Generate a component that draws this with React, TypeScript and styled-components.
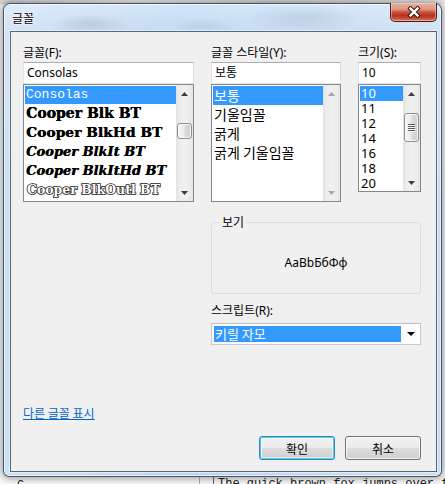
import React from "react";
import styled, { createGlobalStyle, css } from "styled-components";

const GlobalStyle = createGlobalStyle`
  html, body { margin: 0; padding: 0; }
  body {
    width: 445px; height: 484px; overflow: hidden; background: #fff;
    font-family: "Noto Sans", "Noto Sans CJK KR", sans-serif;
  }
  * { box-sizing: border-box; }
`;

const UI_FONT = `"Noto Sans", "Noto Sans CJK KR", sans-serif`;
const KR_FONT = `"Noto Sans CJK KR", "Noto Sans", sans-serif`;

/* ---------- desktop / background app ---------- */
const Desktop = styled.div`
  position: relative;
  width: 445px;
  height: 484px;
  overflow: hidden;
  background: #fff;
`;

const BackApp = styled.div`
  width: 100%;
  height: 100%;
  display: grid;
  grid-template-columns: 1fr 3px;
`;

const BackMain = styled.div`
  display: flex;
  flex-direction: column;
  justify-content: space-between;
  background: #fbfbfb;
`;

const BackTopStrip = styled.div`
  height: 4px;
  background: linear-gradient(90deg, #d8d8d8, #f4f4f4 30%, #dcdcdc 60%, #efefef);
`;

const BackBottomRow = styled.div`
  height: 10px;
  display: flex;
  font-family: "Liberation Mono", monospace;
  font-size: 12px;
  line-height: 14px;
  color: #222;
`;

const BackCell = styled.div<{ $w?: number; $line?: string }>`
  ${(p) => (p.$w ? `width: ${p.$w}px; flex: none;` : "flex: 1;")}
  ${(p) => (p.$line ? `border-right: 1px solid ${p.$line};` : "")}
  padding: 3px 0 0 4px;
  white-space: nowrap;
  overflow: hidden;
`;

const BackRightStrip = styled.div`
  margin-top: 26px;
  background: linear-gradient(180deg, #2e3238, #45494f 40%, #3a3e44);
`;

/* ---------- window frame ---------- */
const Window = styled.div`
  position: absolute;
  left: 3px;
  top: 3px;
  width: 439px;
  height: 474px;
  border: 1px solid rgba(38, 52, 70, 0.8);
  border-radius: 7px 7px 6px 6px;
  padding: 0 4px 4px 6px;
  display: flex;
  flex-direction: column;
  background:
    radial-gradient(ellipse 40px 10px at 85px 20px, rgba(110, 130, 160, 0.22), transparent),
    radial-gradient(ellipse 60px 14px at 300px 14px, rgba(110, 130, 160, 0.18), transparent),
    radial-gradient(ellipse 30px 8px at 200px 22px, rgba(120, 140, 170, 0.15), transparent),
    linear-gradient(90deg, rgba(255, 255, 255, 0.25), rgba(255, 255, 255, 0) 40%, rgba(255, 255, 255, 0.2)),
    linear-gradient(180deg, #d3e5f7 0px, #c2d9f1 30px, #b9d3ee 60%, #bcd6f0 100%);
  box-shadow:
    0 0 8px 1px rgba(0, 0, 0, 0.45),
    inset 0 0 0 1px rgba(255, 255, 255, 0.6);
`;

const TitleBar = styled.div`
  height: 27px;
  flex: none;
  display: flex;
  align-items: flex-start;
`;

const TitleText = styled.div`
  margin: 6px 0 0 2px;
  font-family: ${KR_FONT};
  font-size: 12px;
  line-height: 16px;
  color: #000;
  text-shadow: 0 0 6px #fff, 0 0 3px #fff, 0 0 1px #fff;
`;

const CloseButton = styled.div`
  margin-left: auto;
  width: 47px;
  height: 19px;
  margin-top: -1px;
  border: 1px solid #4a1f18;
  border-top: none;
  border-radius: 0 0 5px 5px;
  display: flex;
  align-items: center;
  justify-content: center;
  background: linear-gradient(
    180deg,
    #eab0a2 0%,
    #de9482 35%,
    #c8533c 50%,
    #b8321d 70%,
    #c9553a 88%,
    #e08a68 100%
  );
  box-shadow: inset 0 0 0 1px rgba(255, 220, 210, 0.45);
`;

const CloseGlyph = () => (
  <svg width="14" height="12" viewBox="0 0 14 12">
    <path d="M3.5 2.5 L10.5 9.5 M10.5 2.5 L3.5 9.5" stroke="#3d1a14" strokeWidth="4.4" strokeLinecap="square" />
    <path d="M3.5 2.5 L10.5 9.5 M10.5 2.5 L3.5 9.5" stroke="#ffffff" strokeWidth="2.4" strokeLinecap="square" />
  </svg>
);

/* ---------- client area ---------- */
const Client = styled.div`
  flex: 1;
  min-height: 0;
  background: #f0f0f0;
  border: 1px solid #56677a;
  box-shadow: 0 0 0 1px rgba(255, 255, 255, 0.5);
  padding: 13px 15px 11px 12px;
  display: flex;
  flex-direction: column;
  font-family: ${UI_FONT};
  font-size: 12px;
  color: #000;
`;

const TopGrid = styled.div`
  display: grid;
  grid-template-columns: 171px 130px 63px;
  column-gap: 17px;
  align-items: start;
`;

const Column = styled.div`
  display: flex;
  flex-direction: column;
`;

const Label = styled.div<{ $gap?: number }>`
  height: 16px;
  line-height: 16px;
  margin-bottom: ${(p) => p.$gap ?? 1}px;
  white-space: nowrap;
  font-family: ${UI_FONT};
  font-size: 12px;
`;

const TextInput = styled.div`
  height: 22px;
  border: 1px solid #abadb3;
  border-left-color: #e2e3ea;
  border-right-color: #dbdfe6;
  border-bottom-color: #e3e9ef;
  background: #fff;
  padding: 0 3px;
  line-height: 20px;
  font-family: ${UI_FONT};
  font-size: 12px;
  white-space: nowrap;
  overflow: hidden;
`;

const ListBox = styled.div<{ $h: number }>`
  height: ${(p) => p.$h}px;
  border: 1px solid #828790;
  background: #fff;
  display: flex;
  overflow: hidden;
`;

const ListItems = styled.div`
  flex: 1;
  min-width: 0;
  padding: 1px 0 0 1px;
  display: flex;
  flex-direction: column;
`;

type FontKind = "mono" | "blk" | "blkhd" | "it" | "ithd" | "outl" | "kr" | "num";

const heavy = css`
  font-family: "DejaVu Serif", serif;
  font-weight: bold;
  text-shadow: 0.45px 0 0 currentColor;
`;

const fontKindCss: Record<FontKind, ReturnType<typeof css>> = {
  mono: css`
    font-family: "Liberation Mono", monospace;
    font-size: 13px;
  `,
  blk: css`
    ${heavy};
    font-size: 14px;
  `,
  blkhd: css`
    ${heavy};
    font-size: 13.7px;
    letter-spacing: 0.1px;
  `,
  it: css`
    ${heavy};
    font-style: italic;
    font-size: 13px;
  `,
  ithd: css`
    ${heavy};
    font-style: italic;
    font-size: 13px;
  `,
  outl: css`
    font-family: "DejaVu Serif", serif;
    font-weight: bold;
    font-size: 12.5px;
    color: #fff;
    -webkit-text-stroke: 1.6px #1a1a1a;
    paint-order: stroke fill;
    padding-left: 2px;
  `,
  kr: css`
    font-family: ${KR_FONT};
    font-size: 14px;
  `,
  num: css`
    font-family: ${UI_FONT};
    font-size: 13px;
  `,
};

const ListItem = styled.div<{ $h: number; $kind: FontKind; $sel?: boolean }>`
  height: ${(p) => p.$h}px;
  flex: none;
  line-height: ${(p) => p.$h}px;
  padding-left: 1px;
  white-space: nowrap;
  overflow: hidden;
  color: #000;
  ${(p) => fontKindCss[p.$kind]}
  ${(p) =>
    p.$sel &&
    css`
      background: #3399ff;
      color: #fff;
    `}
`;

/* ---------- scrollbar ---------- */
const SBar = styled.div`
  width: 17px;
  flex: none;
  display: flex;
  flex-direction: column;
  background: linear-gradient(90deg, #e1e1e1 0%, #ececec 18%, #f1f1f1 50%, #ececec 82%, #e4e4e4 100%);
`;

const SBtn = styled.div`
  height: 17px;
  flex: none;
  display: flex;
  align-items: center;
  justify-content: center;
`;

const STrack = styled.div`
  flex: 1;
  display: flex;
  flex-direction: column;
`;

const SThumb = styled.div<{ $top: number; $h: number }>`
  margin: ${(p) => p.$top}px 1px 0 1px;
  height: ${(p) => p.$h}px;
  border: 1px solid #8e8f8f;
  border-radius: 3px;
  background: linear-gradient(90deg, #f4f4f4 0%, #ececec 45%, #dadada 55%, #d0d0d0 100%);
  box-shadow: inset 0 0 0 1px rgba(255, 255, 255, 0.75);
  display: flex;
  flex-direction: column;
  align-items: center;
  justify-content: center;
  gap: 1px;
`;

const Grip = styled.div`
  width: 7px;
  height: 1px;
  background: #5b5b5b;
  box-shadow: 0 1px 0 #fafafa;
`;

const Arrow = ({ up, color }: { up?: boolean; color: string }) => (
  <svg width="7" height="4" viewBox="0 0 7 4">
    <polygon points={up ? "3.5,0 7,4 0,4" : "0,0 7,0 3.5,4"} fill={color} />
  </svg>
);

const Scrollbar = ({
  enabled = true,
  thumbTop,
  thumbHeight,
  grip,
}: {
  enabled?: boolean;
  thumbTop?: number;
  thumbHeight?: number;
  grip?: boolean;
}) => {
  const c = enabled ? "#3f3f3f" : "#a6a6a6";
  return (
    <SBar>
      <SBtn>
        <Arrow up color={c} />
      </SBtn>
      <STrack>
        {enabled && thumbHeight ? (
          <SThumb $top={thumbTop ?? 0} $h={thumbHeight}>
            {grip && (
              <>
                <Grip />
                <Grip />
                <Grip />
                <Grip />
              </>
            )}
          </SThumb>
        ) : null}
      </STrack>
      <SBtn>
        <Arrow color={c} />
      </SBtn>
    </SBar>
  );
};

/* ---------- preview group, script ---------- */
const RightBlock = styled.div`
  grid-column: 2 / 4;
  display: flex;
  flex-direction: column;
`;

const GroupBox = styled.fieldset`
  margin: 12px 0 0 0;
  padding: 0;
  min-width: 0;
  border: 1px solid #d5dfe5;
  border-radius: 3px;
  height: 80px;
`;

const GroupLegend = styled.legend`
  margin-left: 8px;
  padding: 0 2px;
  font-family: ${KR_FONT};
  font-size: 12px;
  line-height: 16px;
`;

const Sample = styled.div`
  padding-top: 25px;
  line-height: 16px;
  text-align: center;
  font-family: ${UI_FONT};
  font-size: 12px;
`;

const ScriptLabel = styled(Label)`
  margin-top: 9px;
`;

const Dropdown = styled.div`
  height: 22px;
  border: 1px solid #c5cad0;
  border-top-color: #b9bec4;
  background: #fff;
  display: flex;
  align-items: stretch;
  padding: 2px 0 2px 2px;
`;

const DropValue = styled.div`
  flex: 1;
  background: #3399ff;
  color: #fff;
  font-family: ${KR_FONT};
  font-size: 13px;
  line-height: 16px;
  padding-left: 1px;
`;

const DropArrow = styled.div`
  width: 19px;
  flex: none;
  display: flex;
  align-items: center;
  justify-content: center;
`;

/* ---------- bottom ---------- */
const Spacer = styled.div`
  flex: 1;
`;

const MoreLink = styled.a`
  align-self: flex-start;
  font-family: ${KR_FONT};
  font-size: 12px;
  line-height: 16px;
  color: #0066cc;
  text-decoration: underline;
  margin-bottom: 15px;
  cursor: pointer;
`;

const ButtonRow = styled.div`
  display: flex;
  justify-content: flex-end;
  gap: 10px;
`;

const Button = styled.button<{ $default?: boolean }>`
  width: 76px;
  height: 24px;
  padding: 0;
  border-radius: 3px;
  font-family: ${KR_FONT};
  font-size: 12px;
  color: #000;
  border: 1px solid #707070;
  background: linear-gradient(180deg, #f2f2f2 0%, #ebebeb 48%, #dddddd 52%, #cfcfcf 100%);
  box-shadow: inset 0 0 0 1px rgba(255, 255, 255, 0.8);
  ${(p) =>
    p.$default &&
    css`
      border-color: #3c7fb1;
      box-shadow: inset 0 0 0 1px #48d1f9, inset 0 0 0 2px rgba(255, 255, 255, 0.5);
    `}
`;

/* ---------- data ---------- */
const fonts: { name: string; kind: FontKind; h: number }[] = [
  { name: "Consolas", kind: "mono", h: 18 },
  { name: "Cooper Blk BT", kind: "blk", h: 19 },
  { name: "Cooper BlkHd BT", kind: "blkhd", h: 19 },
  { name: "Cooper BlkIt BT", kind: "it", h: 19 },
  { name: "Cooper BlkItHd BT", kind: "ithd", h: 19 },
  { name: "Cooper BlkOutl BT", kind: "outl", h: 19 },
];

const styles = ["보통", "기울임꼴", "굵게", "굵게 기울임꼴"];
const sizes = ["10", "11", "12", "14", "16", "18", "20"];

export default function App() {
  return (
    <>
      <GlobalStyle />
      <Desktop>
        <BackApp>
          <BackMain>
            <BackTopStrip />
            <BackBottomRow>
              <BackCell $w={200} $line="#b5b5b5">
                <span style={{ paddingLeft: 13 }}>c</span>
              </BackCell>
              <BackCell $w={14} $line="#6a6a6a" />
              <BackCell>The quick brown fox jumps over fo</BackCell>
            </BackBottomRow>
          </BackMain>
          <BackRightStrip />
        </BackApp>

        <Window>
          <TitleBar>
            <TitleText>글꼴</TitleText>
            <CloseButton>
              <CloseGlyph />
            </CloseButton>
          </TitleBar>

          <Client>
            <TopGrid>
              <Column>
                <Label>글꼴(F):</Label>
                <TextInput>Consolas</TextInput>
                <ListBox $h={118}>
                  <ListItems>
                    {fonts.map((f, i) => (
                      <ListItem key={f.name} $h={f.h} $kind={f.kind} $sel={i === 0}>
                        {f.name}
                      </ListItem>
                    ))}
                  </ListItems>
                  <Scrollbar thumbTop={21} thumbHeight={16} />
                </ListBox>
              </Column>

              <Column>
                <Label>글꼴 스타일(Y):</Label>
                <TextInput>보통</TextInput>
                <ListBox $h={118}>
                  <ListItems>
                    {styles.map((s, i) => (
                      <ListItem key={s} $h={19} $kind="kr" $sel={i === 0}>
                        {s}
                      </ListItem>
                    ))}
                  </ListItems>
                  <Scrollbar enabled={false} />
                </ListBox>
              </Column>

              <Column>
                <Label>크기(S):</Label>
                <TextInput>10</TextInput>
                <ListBox $h={108}>
                  <ListItems>
                    {sizes.map((s, i) => (
                      <ListItem key={s} $h={15} $kind="num" $sel={i === 0}>
                        {s}
                      </ListItem>
                    ))}
                  </ListItems>
                  <Scrollbar thumbTop={11} thumbHeight={29} grip />
                </ListBox>
              </Column>

              <RightBlock>
                <GroupBox>
                  <GroupLegend>보기</GroupLegend>
                  <Sample>AaBbБбФф</Sample>
                </GroupBox>
                <ScriptLabel $gap={4}>스크립트(R):</ScriptLabel>
                <Dropdown>
                  <DropValue>키릴 자모</DropValue>
                  <DropArrow>
                    <svg width="8" height="4" viewBox="0 0 8 4">
                      <polygon points="0,0 8,0 4,4" fill="#000" />
                    </svg>
                  </DropArrow>
                </Dropdown>
              </RightBlock>
            </TopGrid>

            <Spacer />
            <MoreLink>다른 글꼴 표시</MoreLink>
            <ButtonRow>
              <Button $default>확인</Button>
              <Button>취소</Button>
            </ButtonRow>
          </Client>
        </Window>
      </Desktop>
    </>
  );
}
